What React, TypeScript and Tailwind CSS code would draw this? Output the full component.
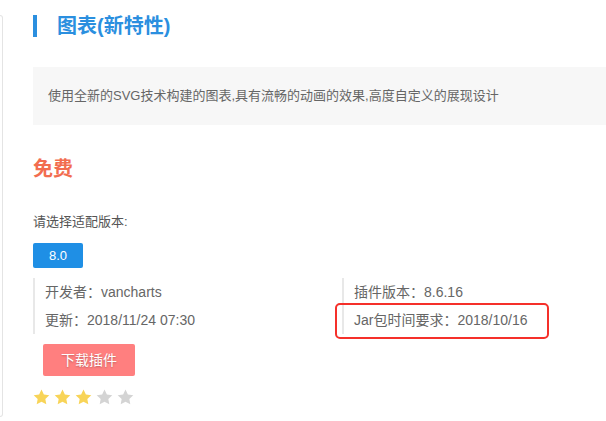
import React from "react";

const FONT = { fontFamily: '"Liberation Sans", "Noto Sans CJK SC", sans-serif' };

function Star({ on }: { on: boolean }) {
  return (
    <svg width="17" height="16" viewBox="0 0 24 23" className={on ? "text-[#f8d458]" : "text-[#d4d4d4]"}>
      <path
        fill="currentColor"
        d="M12 0.8l3.4 7.1 7.8 1-5.7 5.4 1.4 7.7L12 18.3l-6.9 3.7 1.4-7.7L0.8 8.9l7.8-1z"
      />
    </svg>
  );
}

export default function App() {
  const rating = 3;

  return (
    <div className="w-[606px] h-[421px] bg-white overflow-hidden flex" style={FONT}>
      {/* edge of the neighbouring card */}
      <div className="mt-[15px] h-[402px] w-[3px] shrink-0 border-y border-r border-[#e4e4e4] rounded-r-[4px]" />

      <div className="ml-[30px] pt-[15px] w-[600px] shrink-0">
        {/* Title */}
        <div className="flex items-center h-[22px]">
          <span className="w-[4px] h-[22px] bg-[#2b8fdf]" />
          <h2 className="ml-[20px] text-[20px] leading-[22px] font-bold text-[#2b8fdf]">图表(新特性)</h2>
        </div>

        {/* Description */}
        <div className="mt-[30px] h-[58px] bg-[#f7f7f7] flex items-center pl-[15px]">
          <p className="text-[13px] text-[#666]">
            使用全新的SVG技术构建的图表,具有流畅的动画的效果,高度自定义的展现设计
          </p>
        </div>

        {/* Price */}
        <div className="mt-[30px] text-[20px] leading-[28px] font-bold text-[#f26d50]">免费</div>

        <div className="mt-[29px] text-[13px] leading-[20px] text-[#555]">请选择适配版本:</div>

        <button className="mt-[11px] w-[50px] h-[25px] rounded-[2px] bg-[#1f8fe5] text-white text-[13px] leading-[25px] text-center">
          8.0
        </button>

        {/* Info */}
        <div className="mt-[10px] flex text-[14px] leading-[28px] text-[#666]">
          <div className="w-[309px] border-l-2 border-[#e8e8e8] pl-[10px]">
            <div>开发者：vancharts</div>
            <div>更新：2018/11/24 07:30</div>
          </div>
          <div className="border-l-2 border-[#e8e8e8] pl-[10px]">
            <div>插件版本：8.6.16</div>
            <div className="relative">
              Jar包时间要求：2018/10/16
              <span className="absolute left-[-19px] top-[-3px] w-[214px] h-[36px] border-2 border-[#f5302a] rounded-[5px]" />
            </div>
          </div>
        </div>

        <button className="mt-[10px] ml-[10px] w-[92px] h-[32px] rounded-[2px] bg-[#ff7f7f] text-white text-[14px] [text-shadow:0_1px_2px_rgba(0,0,0,0.25)]">
          下载插件
        </button>

        {/* Rating */}
        <div className="mt-[13px] flex gap-[4px]">
          {[0, 1, 2, 3, 4].map((i) => (
            <Star key={i} on={i < rating} />
          ))}
        </div>
      </div>
    </div>
  );
}
